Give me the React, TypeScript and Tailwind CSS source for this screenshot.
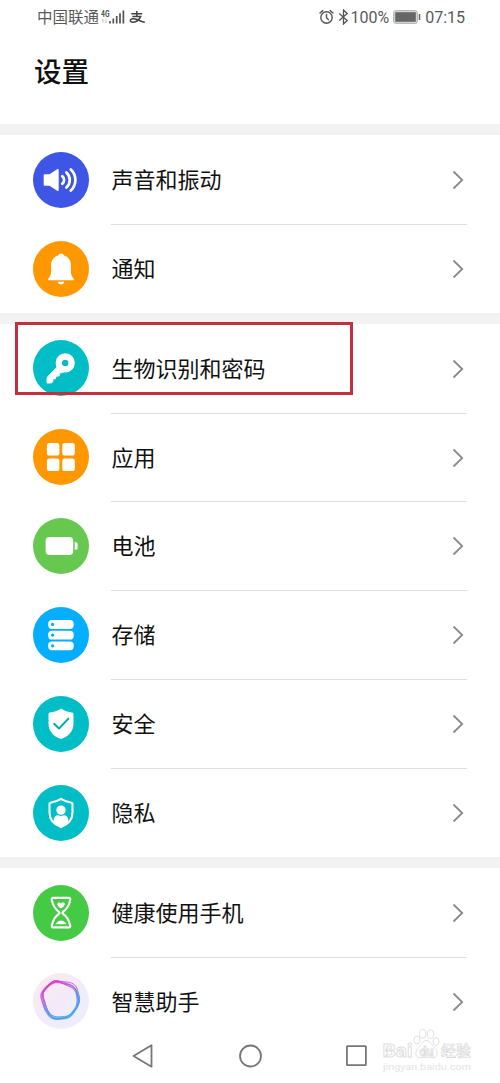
import type { ReactNode } from 'react';

interface SettingItem {
  title: string;
  bg: string;
  icon: ReactNode;
  marked?: boolean;
}

/* ── Row icons, all drawn on a 56x56 canvas ── */
const soundIcon = (
  <>
    <path d="M11.7 22.3h4.8l8-5.2q1.200-.6 1.200.8v20.200q0 1.400-1.200.8l-8-5.200h-4.800q-1 0-1-1v-9.400q0-1 1-1z" fill="#fff" />
    <g fill="none" stroke="#fff" strokeWidth="2.700" strokeLinecap="round">
      <path d="M29.200 24.200a4.700 4.700 0 0 1 0 7.600" />
      <path d="M33.400 20.500a10 10 0 0 1 0 15" />
      <path d="M37.800 17.400a14.600 14.600 0 0 1 0 21.200" />
    </g>
  </>
);

const bellIcon = (
  <g fill="#fff">
    <path d="M28 12.600c1.500 0 2.500.8 2.800 2 4.400 1.200 7.100 4.900 7.100 9.600v6.300c0 3 .9 4.700 2.600 6.900.8 1.100.4 1.900-.7 1.900H16.200c-1.100 0-1.500-.8-.7-1.900 1.700-2.200 2.600-3.900 2.600-6.900v-6.300c0-4.700 2.700-8.400 7.100-9.600.3-1.200 1.300-2 2.800-2z" />
    <path d="M24.800 40.700h6.400c-.3 1.700-1.500 2.700-3.200 2.700s-2.900-1-3.200-2.700z" />
  </g>
);

const keyIcon = (
  <>
    <circle cx="32.200" cy="22.900" r="6.400" fill="none" stroke="#fff" strokeWidth="6.400" />
    <path
      d="M24.600 26.300 14.700 36.600q-.6.7-.7 1.600l-.3 3.800q0 1.200 1.200 1.200l3.600-.1 1.500-1.700v-2.300l2.400-.1.600-2.600 3.300-.5.300-2.500 4.400-1.300z"
      fill="#fff"
      stroke="#fff"
      strokeWidth=".6"
      strokeLinejoin="round"
    />
  </>
);

const appsIcon = (
  <g fill="#fff">
    <rect x="13.900" y="14.100" width="12.500" height="12.500" rx="2.600" />
    <rect x="29.300" y="14.100" width="12.500" height="12.500" rx="2.600" />
    <rect x="13.900" y="29.500" width="12.500" height="12.500" rx="2.600" />
    <rect x="29.300" y="29.500" width="12.500" height="12.500" rx="2.600" />
  </g>
);

const batteryIcon = (
  <g fill="#fff">
    <rect x="12.600" y="19.100" width="27.600" height="17.800" rx="4" />
    <path d="M41.700 24.200h1.400q1.500 0 1.500 1.500v4.600q0 1.500-1.500 1.500h-1.400z" />
  </g>
);

const storageIcon = (
  <>
    <g fill="#fff">
      <rect x="15.200" y="13" width="25.500" height="8.900" rx="3.700" />
      <rect x="15.200" y="23.700" width="25.500" height="8.900" rx="3.700" />
      <rect x="15.200" y="34.400" width="25.500" height="8.900" rx="3.700" />
    </g>
    <g fill="#04a9f5">
      <circle cx="19.600" cy="17.400" r="1.600" />
      <circle cx="19.600" cy="28.100" r="1.600" />
      <circle cx="19.600" cy="38.800" r="1.600" />
    </g>
  </>
);

const safetyIcon = (
  <>
    <path
      d="M28 12.400c3.500 2.300 7 3.500 11.200 4.200q1.300.2 1.300 1.500v9.400c0 8-5.200 13-12.500 15.600-7.300-2.600-12.500-7.600-12.500-15.600v-9.400q0-1.300 1.300-1.500c4.200-.7 7.700-1.900 11.200-4.200z"
      fill="#fff"
    />
    <path d="m21.100 27.800 4.900 4.700 9.400-9.900" fill="none" stroke="#00a8b2" strokeWidth="1.900" strokeLinecap="round" strokeLinejoin="round" />
  </>
);

const privacyIcon = (
  <>
    <path
      d="M28 13.800c3.500 2.200 6.700 3.200 10.500 3.900q1 .2 1 1.200v8.600c0 7.300-4.700 12-11.500 14.500-6.800-2.500-11.500-7.200-11.500-14.500v-8.600q0-1 1-1.200c3.800-.7 7-1.700 10.500-3.900z"
      fill="none"
      stroke="#fff"
      strokeWidth="2.100"
    />
    <circle cx="28" cy="25.100" r="4.700" fill="#fff" />
    <path d="M20.600 36c0-3.700 1.700-5.700 4.700-5.700q2.700 1.200 5.400 0c3 0 4.700 2 4.700 5.700-1.800 2.500-4.300 4.500-7.400 5.600-3.100-1.100-5.600-3.100-7.400-5.600z" fill="#fff" />
  </>
);

const healthIcon = (
  <>
    <path
      d="M20.300 12.900h15.400c1.400 0 1.700.9 1.400 2.500-1 5-3.100 8.600-7 11.400q-1.200 1 0 2c3.900 2.800 6 6.400 7 11.400.3 1.600 0 2.200-1.400 2.200H20.300c-1.400 0-1.700-.6-1.400-2.200 1-5 3.100-8.600 7-11.400q1.200-1 0-2c-3.900-2.800-6-6.400-7-11.400-.3-1.600 0-2.500 1.400-2.500z"
      fill="none"
      stroke="#fff"
      strokeWidth="2.200"
    />
    <path d="M28 23.500c-2.200-1.400-3.700-2.800-3.700-4.300 0-1.900 2.500-2.400 3.700-.7 1.500-2 4-1.200 3.800.7-.2 1.500-1.600 2.900-3.800 4.300z" fill="#fff" />
    <path d="M22.400 39.200c1.100-2.200 2.800-2.500 4.200-3.400q1.400-.7 2.800 0c1.400.9 3.100 1.200 4.200 3.400z" fill="#fff" />
  </>
);

const assistantIcon = (
  <>
    <defs>
      <linearGradient id="halo" x1="0" y1="0" x2="1" y2="1">
        <stop offset="0" stopColor="#fbebe9" />
        <stop offset=".5" stopColor="#f3eafa" />
        <stop offset="1" stopColor="#eaf0ff" />
      </linearGradient>
      <linearGradient id="ring" x1=".2" y1="0" x2=".75" y2="1">
        <stop offset="0" stopColor="#e52cc5" />
        <stop offset=".35" stopColor="#b65fe0" />
        <stop offset=".6" stopColor="#5d8ae6" />
        <stop offset="1" stopColor="#35a5e8" />
      </linearGradient>
    </defs>
    <circle cx="28" cy="28" r="28" fill="url(#halo)" />
    {/* soft band under the strands */}
    <path
      d="M20.500 9.500c4-2 7.500 0 12 1.200 5.500 1.300 9.200 3.300 10.800 8.100 1.300 4 2.700 7.300 1.700 11.700-1.200 4.800-3.800 6.600-6.300 10.400-2.500 3.700-5.900 4.200-10.700 4.500-4.700.3-8.600.5-11.800-3.100-2.900-3.400-4.500-6.600-5.700-11.500-1-4-3-7.700-1-11.300C11.800 15.500 16.200 11.600 20.500 9.500z"
      fill="none"
      stroke="url(#ring)"
      strokeWidth="2.800"
      opacity=".5"
    />
    <g fill="none" stroke="url(#ring)" strokeWidth=".9">
      <path d="M20 8.500c3-2 7 .2 12 .4 7 .3 11 2.600 12.500 8 1 4 3 8 1.800 12.500-1.300 4.500-3.500 6.800-6 11-2.600 4.400-6 5-10.800 5.200-5 .2-9.500 1.500-12.500-2-3-3.600-5.500-6.800-6.800-12-1-4-3.500-7.800-1.500-11.500C11 15 16.500 10.900 20 8.500z" />
      <path d="M21 9.500c4-1.600 7 .6 11.500 1.300C38 11.500 42 14 43.500 19c1.200 4 2.600 7.300 1.800 11.500-1 5-4.500 6.500-7 10.500-2.300 3.500-5.600 3.700-10 4-4.800.4-8 1.300-11.300-2.500-3-3.600-4.600-6.700-5.800-11.500-1-4-2.600-8-.7-11.500C12.500 15.500 17 11 21 9.500z" />
      <path d="M19 10c3.500-2.500 8.500-1 13 1.500 5 2.700 9.700 3.200 11.300 8.500 1.200 4 .8 7 .4 11.500-.4 4.800-2.700 6.500-6.200 9.500-3.300 3-6.500 4.700-11 5-4.500.4-7.500-1.600-10-5.500-2.300-3.500-3.500-6.500-4.500-11-1-4.300-3.300-7-1.500-10.800C12 15.500 15.500 12.500 19 10z" />
      <path d="M23 7.800c3 .5 6 2.700 10 3.200 5.500.6 9 3 10.700 7.500 1.500 4 2.700 7.500 1.300 12-1.500 4.600-2.700 6.500-5.500 9.700-3 3.400-6.500 3-11.500 3.500-4.600.5-8.500-.2-11.500-3.700-2.800-3.300-3.500-7.500-5-11.500-1.300-3.700-2.500-7-.5-10.500C13.500 13.700 18 7.300 23 7.800z" />
    </g>
  </>
);

const groups: SettingItem[][] = [
  [
    { title: '声音和振动', bg: 'bg-[#3e55e6]', icon: soundIcon },
    { title: '通知', bg: 'bg-[#ff9800]', icon: bellIcon },
  ],
  [
    { title: '生物识别和密码', bg: 'bg-[#00bdc6]', icon: keyIcon, marked: true },
    { title: '应用', bg: 'bg-[#ff9800]', icon: appsIcon },
    { title: '电池', bg: 'bg-[#67c84f]', icon: batteryIcon },
    { title: '存储', bg: 'bg-[#04aeff]', icon: storageIcon },
    { title: '安全', bg: 'bg-[#00bdc6]', icon: safetyIcon },
    { title: '隐私', bg: 'bg-[#00bdc6]', icon: privacyIcon },
  ],
  [
    { title: '健康使用手机', bg: 'bg-[#45ca45]', icon: healthIcon },
    { title: '智慧助手', bg: 'bg-transparent', icon: assistantIcon },
  ],
];

export default function App() {
  return (
    <div className="relative flex flex-col w-[500px] h-[1083px] overflow-hidden bg-white font-['Roboto','Noto_Sans_CJK_SC',sans-serif] text-[#111]">
      <StatusBar />
      <header className="h-[90px] shrink-0 pl-[34px] pt-[19px]">
        <h1 className="text-[27.5px] leading-[40px] font-medium">设置</h1>
      </header>

      {groups.map((items, i) => (
        <section key={i} className="shrink-0 border-t-[11px] border-[#f2f2f2]">
          {items.map((item, j) => (
            <SettingRow key={item.title} item={item} last={j === items.length - 1} />
          ))}
        </section>
      ))}

      <NavBar />
      <Watermark />
    </div>
  );
}

function StatusBar() {
  return (
    <div className="flex items-center justify-between h-[34px] shrink-0 pl-[37px] pr-[35px] text-[#5a5a5a]">
      <div className="flex items-center">
        <span className="pt-[4px] text-[15.500px] leading-none">中国联通</span>
        <svg className="ml-[2px]" width="24" height="18" viewBox="0 0 24 18">
          <text x="0" y="8.500" fontSize="9" fontWeight="700" fill="#555" textLength="8.500" lengthAdjust="spacingAndGlyphs">4G</text>
          <path d="M2 11v4M1 12l1-1M5 11v4M6 14l-1 1" stroke="#bbb" strokeWidth=".8" fill="none" />
          <path d="M9 13v2.500M12.300 10.500v5M15.700 8v7.500M19 5.200v10.300M22.400 2.500v13" stroke="#555" strokeWidth="1.700" />
        </svg>
        <svg className="ml-[4px]" width="17" height="16" viewBox="0 0 17 16" fill="none" stroke="#444" strokeWidth="1.500">
          <path d="M2.300 4.800h10.900M7.800 2v5M3.300 7.400h8.400C10.300 10.800 7 13.200 4 13.200c-2.200 0-3-1.100-2.600-2.200.6-1.700 3.700-1.700 6.800-.5 3 1.200 5.100 2.300 7.600 2.800" />
        </svg>
      </div>

      <div className="flex items-center">
        <svg width="15" height="16" viewBox="0 0 15 16" fill="none" stroke="#555" strokeWidth="1.400" strokeLinecap="round">
          <circle cx="7.500" cy="8.500" r="5.700" />
          <path d="M7.500 5.500v3.200l2 2M1 4 3.800 1.600M14 4l-2.800-2.400" />
        </svg>
        <svg className="ml-[4px]" width="11" height="16" viewBox="0 0 11 16" fill="none" stroke="#555" strokeWidth="1.300">
          <path d="m1.200 4.500 8 7L5.500 15V1l3.700 3.500-8 7" />
        </svg>
        <span className="ml-[1px] pt-[2px] text-[16px] leading-none">100%</span>
        <svg className="ml-[4px]" width="28" height="14" viewBox="0 0 28 14">
          <rect x=".7" y=".7" width="23.600" height="12.600" rx="2" fill="#ddd" stroke="#aaa" strokeWidth="1" />
          <rect x="2.200" y="2.200" width="20.600" height="9.600" fill="#666" />
          <path d="M26.500 4v6" stroke="#666" strokeWidth="1.500" />
        </svg>
        <span className="ml-[4px] pt-[2px] text-[16px] leading-none">07:15</span>
      </div>
    </div>
  );
}

function SettingRow({ item, last }: { item: SettingItem; last: boolean }) {
  return (
    <div className="relative flex h-[88.860px] px-[33px]">
      <div className={`self-center mt-[0.6px] size-[56px] shrink-0 rounded-full ${item.bg}`}>
        <svg width="56" height="56" viewBox="0 0 56 56">
          {item.icon}
        </svg>
      </div>
      <div
        className={`flex flex-1 items-center justify-between ml-[22px] -mb-px pt-px pl-[0.5px] pr-[3px] border-b ${
          last ? 'border-transparent' : 'border-[#dedede]'
        }`}
      >
        <span className="pt-[2px] text-[22px] leading-[32px]">{item.title}</span>
        <svg width="12" height="20" viewBox="0 0 12 20" fill="none" stroke="#8a8a8a" strokeWidth="1.800">
          <path d="m1.500 1.500 8.700 8.500-8.700 8.500" />
        </svg>
      </div>
      {item.marked && <div className="absolute left-[15px] top-[-2px] w-[338px] h-[73px] border-3 border-[#c1303b]" />}
    </div>
  );
}

function NavBar() {
  return (
    <nav className="flex items-center h-[37px] shrink-0 -mt-[8px] pl-[131px] gap-[83.500px] text-[#777]">
      <svg width="24" height="26" viewBox="0 0 24 26" fill="none" stroke="currentColor" strokeWidth="1.800" strokeLinejoin="round">
        <path d="M20.500 2.300v21.400L2.500 13z" />
      </svg>
      <svg width="24" height="24" viewBox="0 0 24 24" fill="none" stroke="currentColor" strokeWidth="1.800">
        <circle cx="11.500" cy="12" r="10.500" />
      </svg>
      <svg width="22" height="22" viewBox="0 0 22 22" fill="none" stroke="currentColor" strokeWidth="1.800">
        <rect x=".9" y="1.200" width="19" height="19" rx=".6" />
      </svg>
    </nav>
  );
}

function Watermark() {
  return (
    <svg className="absolute left-[380px] top-[1026px]" width="96" height="48" viewBox="0 0 96 48" fill="#fff" stroke="#dedede" strokeWidth=".9">
      <text x="2.500" y="30.500" fontSize="19" fontWeight="700" textLength="30" lengthAdjust="spacingAndGlyphs">Bai</text>
      <ellipse cx="37" cy="14" rx="3" ry="4" />
      <ellipse cx="42.700" cy="7.800" rx="3.200" ry="4.300" />
      <ellipse cx="50.500" cy="8.200" rx="3.200" ry="4.300" />
      <ellipse cx="56" cy="15.500" rx="3" ry="4" />
      <path d="M46.500 14.500c4 0 5 4.500 8 7.300 3.500 3.200 4 9.700-1.500 10-2.500.2-4-.6-6.500-.6s-4 .8-6.500.6c-5.500-.3-5-6.800-1.500-10 3-2.800 4-7.300 8-7.300z" />
      <text x="39.500" y="29.500" fontSize="12" fontWeight="700" textLength="14" lengthAdjust="spacingAndGlyphs">du</text>
      <text x="61" y="29.500" fontSize="15" fontWeight="500" strokeWidth=".6" stroke="#d6d6d6">经验</text>
      <text x="3" y="43.500" fontSize="9.500" fill="#e4e4e4" stroke="none" textLength="88" lengthAdjust="spacingAndGlyphs">jingyan.baidu.com</text>
    </svg>
  );
}
